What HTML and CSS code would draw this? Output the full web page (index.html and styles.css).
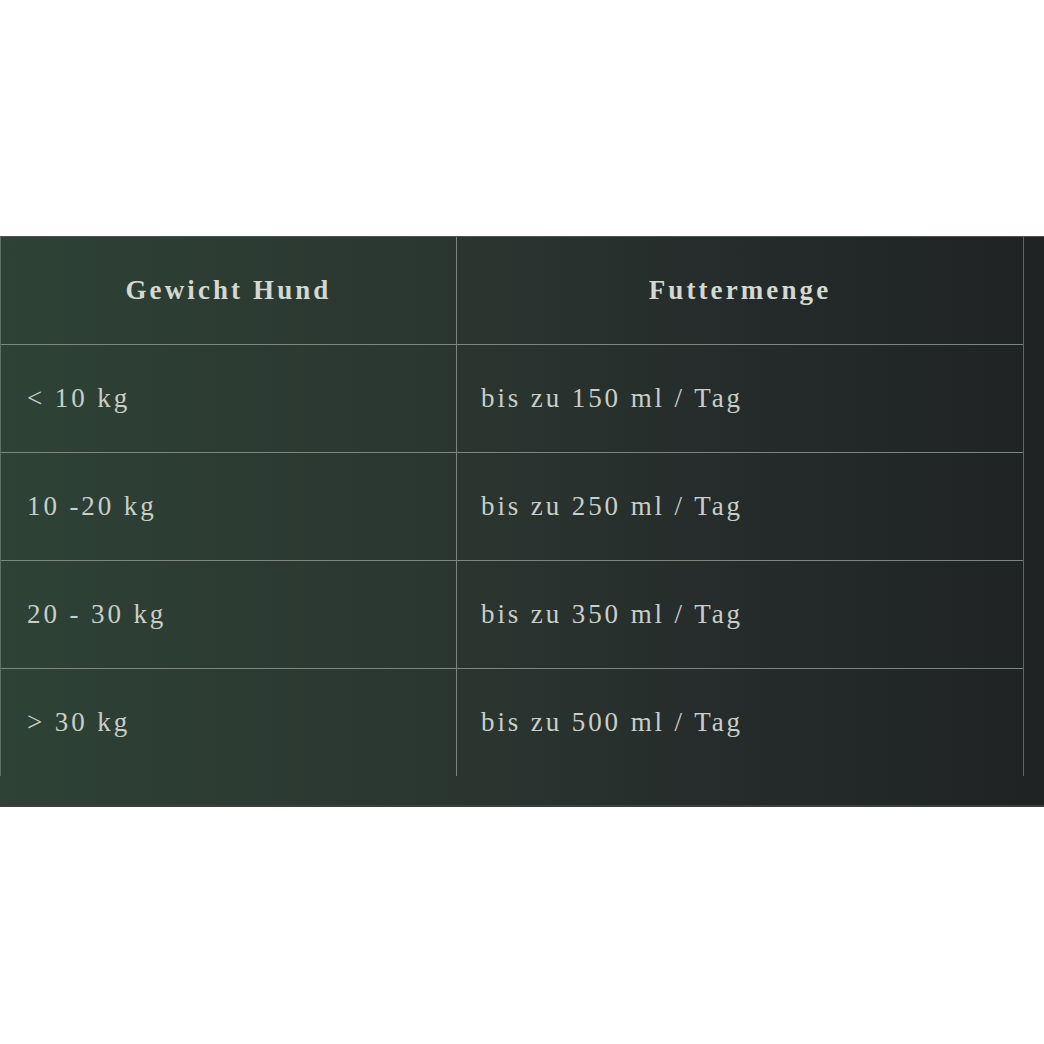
FILE: index.html
```html
<!DOCTYPE html>
<html lang="de">
<head>
<meta charset="utf-8">
<title>Futtermenge</title>
<link rel="stylesheet" href="styles.css">
</head>
<body>
<section class="panel">
  <table class="feed">
    <thead>
      <tr><th>Gewicht Hund</th><th>Futtermenge</th></tr>
    </thead>
    <tbody>
      <tr><td>&lt; 10 kg</td><td>bis zu 150 ml / Tag</td></tr>
      <tr><td>10 -20 kg</td><td>bis zu 250 ml / Tag</td></tr>
      <tr><td>20 - 30 kg</td><td>bis zu 350 ml / Tag</td></tr>
      <tr><td>&gt; 30 kg</td><td>bis zu 500 ml / Tag</td></tr>
    </tbody>
  </table>
</section>
</body>
</html>
```
FILE: styles.css
```css
html, body {
  margin: 0;
  padding: 0;
  background: #ffffff;
}
body {
  width: 1044px;
  height: 1044px;
  overflow: hidden;
}
.panel {
  margin-top: 236px;
  height: 571px;
  box-sizing: border-box;
  border-top: 1px solid #4d5550;
  border-bottom: 2px solid #3a403c;
  background: linear-gradient(90deg, #2e4236 0%, #2a3530 45%, #232829 80%, #202324 100%);
}
.feed {
  border-collapse: collapse;
  width: 1024px;
  table-layout: fixed;
  font-family: "Liberation Serif", "Times New Roman", serif;
  color: #c9cec8;
}
.feed th, .feed td {
  border-left: 1px solid #7d857f;
  border-right: 1px solid #7d857f;
  padding: 0;
  box-sizing: border-box;
}
.feed th:first-child, .feed td:first-child {
  width: 456px;
  border-left-color: #5d6e62;
}
.feed th:last-child, .feed td:last-child {
  border-right-color: #5f6361;
}
.feed thead tr, .feed tbody tr {
  border-bottom: 1px solid #7d857f;
}
.feed tbody tr:last-child {
  border-bottom: none;
}
.feed th {
  font-size: 27px;
  font-weight: 600;
  letter-spacing: 3.1px;
  color: #d3d8d1;
  text-align: center;
  height: 107px;
}
.feed td {
  font-size: 27px;
  letter-spacing: 2.9px;
  text-align: left;
  padding-left: 26px;
  padding-top: 0;
  height: 108px;
}
.feed td:last-child {
  padding-left: 24px;
}
```
